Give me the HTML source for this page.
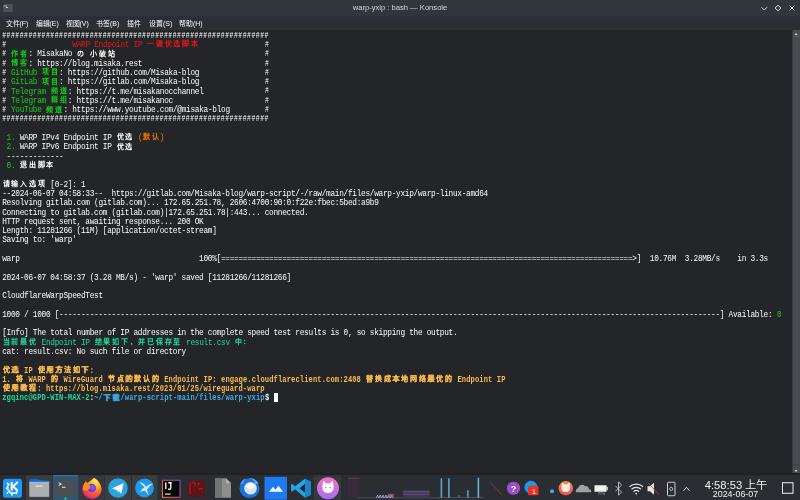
<!DOCTYPE html>
<html lang="zh-CN"><head><meta charset="utf-8">
<style>
*{margin:0;padding:0;box-sizing:border-box}
html,body{width:800px;height:500px;overflow:hidden;background:#232528}
body{position:relative;font-family:"Liberation Sans",sans-serif}
.a{position:absolute}
#title{position:absolute;left:0;top:0;width:800px;height:15.5px;background:#31363b}
#menu{position:absolute;left:0;top:15.5px;width:800px;height:14px;background:linear-gradient(#2b2f37,#2a2d32 80%,#2e3134)}
#term{position:absolute;left:0;top:29.5px;width:792px;height:445px;background:#232528}
#sb{position:absolute;left:792px;top:29.5px;width:8px;height:443px;background:#474b4f;border-left:1px solid #383c40}
#task{position:absolute;left:0;top:474.5px;width:800px;height:25.5px;background:#2a2d31}
.r{position:absolute;left:0;height:9.297px;font-family:"Liberation Mono",monospace;font-size:7.8px;line-height:9.297px;white-space:pre}
.r i{position:absolute;top:1.5px;font-style:normal;letter-spacing:-0.303px;transform:scale(1,1.15);transform-origin:0 6.73px}
.r b.c{position:absolute;top:0.8px;font-weight:bold;width:8.756px;text-align:center;font-size:7.0px}
.bd i{font-weight:bold;font-size:7.1px;letter-spacing:0.117px;transform:scale(1,1.26)}
.bd b.c{font-weight:bold;text-shadow:0.4px 0 0 currentColor}
.r i.h{font-size:6.4px;letter-spacing:0.537px;transform:scale(1,1.3);transform-origin:0 4.2px;top:0.3px}
.cur{position:absolute;width:4.6px;height:8.5px;background:#fcfcfc}
.menu span{position:absolute;top:19.6px;font-size:6.9px;line-height:8px;color:#fcfcfc;white-space:nowrap}
</style></head><body>
<div id="title">
  <div class="a" style="left:3px;top:4px;width:10px;height:8px;background:#4d5155;border-radius:1px"></div>
  <div class="a" style="left:4px;top:4.8px;width:2.5px;height:2.5px;background:#8a8d90;border-radius:1px"></div><div class="a" style="left:6px;top:7px;width:2px;height:0.9px;background:#c8cacc"></div>
  <div class="a" style="will-change:transform;left:0;top:3px;width:800px;text-align:center;font-size:7.6px;line-height:10px;color:#d5d7d9">warp-yxip : bash — Konsole</div>
  <svg class="a" style="left:755px;top:0" width="45" height="16" viewBox="0 0 45 16">
    <path d="M6.5 7.2 L9.3 10 L12.1 7.2" fill="none" stroke="#d8dadc" stroke-width="1"/>
    <path d="M23 5.3 L26 8 L23 10.8 L20 8 Z" fill="none" stroke="#d8dadc" stroke-width="1" stroke-linejoin="round"/>
    <path d="M34.5 5.5 L39.5 10.5 M39.5 5.5 L34.5 10.5" fill="none" stroke="#d8dadc" stroke-width="1"/>
  </svg>
</div>
<div id="menu" class="menu">
</div>
<div class="menu" style="position:absolute;left:0;top:0;width:800px;height:30px;will-change:transform">
  <span style="left:5.5px">文件(F)</span>
  <span style="left:35.5px">编辑(E)</span>
  <span style="left:65.5px">视图(V)</span>
  <span style="left:96px">书签(B)</span>
  <span style="left:127px">插件</span>
  <span style="left:149px">设置(S)</span>
  <span style="left:179px">帮助(H)</span>
</div>
<div id="term"></div>
<div id="sb">
  <div class="a" style="left:0;top:6.3px;width:7px;height:0.8px;background:#565a5e"></div>
  <div class="a" style="left:0;top:434.5px;width:7px;height:0.8px;background:#3e4246"></div>
  <svg class="a" style="left:-1px;top:0" width="8" height="8"><path d="M2.5 5 L4 3 L5.5 5 Z" fill="#e0e0e0"/></svg>
  <svg class="a" style="left:-1px;top:437.5px" width="8" height="8"><path d="M2.5 3 L4 5 L5.5 3 Z" fill="#e0e0e0"/></svg>
</div>
<div id="txt" style="position:absolute;left:0;top:0;width:800px;height:500px;will-change:transform"><div class="r" style="top:30.40px"><i class="h" style="left:2.20px;color:#fcfcfc">#############################################################</i></div>
<div class="r" style="top:39.70px"><i class="h" style="left:2.20px;color:#fcfcfc">#</i><i style="left:72.25px;color:#ed1515">WARP Endpoint IP </i><b class="c" style="left:146.27px;color:#ed1515">一</b><b class="c" style="left:155.03px;color:#ed1515">键</b><b class="c" style="left:163.79px;color:#ed1515">优</b><b class="c" style="left:172.54px;color:#ed1515">选</b><b class="c" style="left:181.30px;color:#ed1515">脚</b><b class="c" style="left:190.05px;color:#ed1515">本</b><i class="h" style="left:264.88px;color:#fcfcfc">#</i></div>
<div class="r" style="top:48.99px"><i class="h" style="left:2.20px;color:#fcfcfc">#</i><b class="c" style="left:10.56px;color:#11d116">作</b><b class="c" style="left:19.31px;color:#11d116">者</b><i style="left:28.47px;color:#fcfcfc">: MisakaNo </i><b class="c" style="left:76.23px;color:#fcfcfc">の</b><b class="c" style="left:89.36px;color:#fcfcfc">小</b><b class="c" style="left:98.12px;color:#fcfcfc">破</b><b class="c" style="left:106.87px;color:#fcfcfc">站</b><i class="h" style="left:264.88px;color:#fcfcfc">#</i></div>
<div class="r" style="top:58.29px"><i class="h" style="left:2.20px;color:#fcfcfc">#</i><b class="c" style="left:10.56px;color:#11d116">博</b><b class="c" style="left:19.31px;color:#11d116">客</b><i style="left:28.47px;color:#fcfcfc">: https://blog.misaka.rest                            </i><i class="h" style="left:264.88px;color:#fcfcfc">#</i></div>
<div class="r" style="top:67.59px"><i class="h" style="left:2.20px;color:#fcfcfc">#</i><i style="left:10.96px;color:#11d116">GitHub </i><b class="c" style="left:41.20px;color:#11d116">项</b><b class="c" style="left:49.96px;color:#11d116">目</b><i style="left:59.11px;color:#fcfcfc">: https://github.com/Misaka-blog               </i><i class="h" style="left:264.88px;color:#fcfcfc">#</i></div>
<div class="r" style="top:76.88px"><i class="h" style="left:2.20px;color:#fcfcfc">#</i><i style="left:10.96px;color:#11d116">GitLab </i><b class="c" style="left:41.20px;color:#11d116">项</b><b class="c" style="left:49.96px;color:#11d116">目</b><i style="left:59.11px;color:#fcfcfc">: https://gitlab.com/Misaka-blog               </i><i class="h" style="left:264.88px;color:#fcfcfc">#</i></div>
<div class="r" style="top:86.18px"><i class="h" style="left:2.20px;color:#fcfcfc">#</i><i style="left:10.96px;color:#11d116">Telegram </i><b class="c" style="left:49.96px;color:#11d116">频</b><b class="c" style="left:58.71px;color:#11d116">道</b><i style="left:67.87px;color:#fcfcfc">: https://t.me/misakanocchannel              </i><i class="h" style="left:264.88px;color:#fcfcfc">#</i></div>
<div class="r" style="top:95.48px"><i class="h" style="left:2.20px;color:#fcfcfc">#</i><i style="left:10.96px;color:#11d116">Telegram </i><b class="c" style="left:49.96px;color:#11d116">群</b><b class="c" style="left:58.71px;color:#11d116">组</b><i style="left:67.87px;color:#fcfcfc">: https://t.me/misakanoc                     </i><i class="h" style="left:264.88px;color:#fcfcfc">#</i></div>
<div class="r" style="top:104.78px"><i class="h" style="left:2.20px;color:#fcfcfc">#</i><i style="left:10.96px;color:#11d116">YouTube </i><b class="c" style="left:45.58px;color:#11d116">频</b><b class="c" style="left:54.34px;color:#11d116">道</b><i style="left:63.49px;color:#fcfcfc">: https://www.youtube.com/@misaka-blog        </i><i class="h" style="left:264.88px;color:#fcfcfc">#</i></div>
<div class="r" style="top:114.07px"><i class="h" style="left:2.20px;color:#fcfcfc">#############################################################</i></div>
<div class="r" style="top:132.67px"><i style="left:6.58px;color:#11d116">1.</i><i style="left:15.33px;color:#fcfcfc"> WARP IPv4 Endpoint IP </i><b class="c" style="left:115.63px;color:#fcfcfc">优</b><b class="c" style="left:124.38px;color:#fcfcfc">选</b><i style="left:137.92px;color:#f67400">(</i><b class="c" style="left:141.90px;color:#f67400">默</b><b class="c" style="left:150.65px;color:#f67400">认</b><i style="left:159.81px;color:#f67400">)</i></div>
<div class="r" style="top:141.96px"><i style="left:6.58px;color:#11d116">2.</i><i style="left:15.33px;color:#fcfcfc"> WARP IPv6 Endpoint IP </i><b class="c" style="left:115.63px;color:#fcfcfc">优</b><b class="c" style="left:124.38px;color:#fcfcfc">选</b></div>
<div class="r" style="top:151.26px"><i style="left:2.20px;color:#fcfcfc"> -------------</i></div>
<div class="r" style="top:160.56px"><i style="left:6.58px;color:#11d116">0.</i><b class="c" style="left:19.31px;color:#fcfcfc">退</b><b class="c" style="left:28.07px;color:#fcfcfc">出</b><b class="c" style="left:36.82px;color:#fcfcfc">脚</b><b class="c" style="left:45.58px;color:#fcfcfc">本</b></div>
<div class="r" style="top:179.15px"><b class="c" style="left:1.80px;color:#fcfcfc">请</b><b class="c" style="left:10.56px;color:#fcfcfc">输</b><b class="c" style="left:19.31px;color:#fcfcfc">入</b><b class="c" style="left:28.07px;color:#fcfcfc">选</b><b class="c" style="left:36.82px;color:#fcfcfc">项</b><i style="left:45.98px;color:#fcfcfc"> [0-2]: 1</i></div>
<div class="r" style="top:188.45px"><i style="left:2.20px;color:#fcfcfc">--2024-06-07 04:58:33--  https://gitlab.com/Misaka-blog/warp-script/-/raw/main/files/warp-yxip/warp-linux-amd64</i></div>
<div class="r" style="top:197.75px"><i style="left:2.20px;color:#fcfcfc">Resolving gitlab.com (gitlab.com)... 172.65.251.78, 2606:4700:90:0:f22e:fbec:5bed:a9b9</i></div>
<div class="r" style="top:207.04px"><i style="left:2.20px;color:#fcfcfc">Connecting to gitlab.com (gitlab.com)|172.65.251.78|:443... connected.</i></div>
<div class="r" style="top:216.34px"><i style="left:2.20px;color:#fcfcfc">HTTP request sent, awaiting response... 200 OK</i></div>
<div class="r" style="top:225.64px"><i style="left:2.20px;color:#fcfcfc">Length: 11281266 (11M) [application/octet-stream]</i></div>
<div class="r" style="top:234.93px"><i style="left:2.20px;color:#fcfcfc">Saving to: &#x27;warp&#x27;</i></div>
<div class="r" style="top:253.53px"><i style="left:2.20px;color:#fcfcfc">warp                                         100%[==============================================================================================&gt;]  10.76M  3.28MB/s    in 3.3s</i></div>
<div class="r" style="top:272.12px"><i style="left:2.20px;color:#fcfcfc">2024-06-07 04:58:37 (3.28 MB/s) - &#x27;warp&#x27; saved [11281266/11281266]</i></div>
<div class="r" style="top:290.72px"><i style="left:2.20px;color:#fcfcfc">CloudflareWarpSpeedTest</i></div>
<div class="r" style="top:309.31px"><i style="left:2.20px;color:#fcfcfc">1000 / 1000 [-------------------------------------------------------------------------------------------------------------------------------------------------------] Available: </i><i style="left:777.11px;color:#11d116">0</i></div>
<div class="r" style="top:327.90px"><i style="left:2.20px;color:#fcfcfc">[Info] The total number of IP addresses in the complete speed test results is 0, so skipping the output.</i></div>
<div class="r" style="top:337.20px"><b class="c" style="left:1.80px;color:#1cdc9a">当</b><b class="c" style="left:10.56px;color:#1cdc9a">前</b><b class="c" style="left:19.31px;color:#1cdc9a">最</b><b class="c" style="left:28.07px;color:#1cdc9a">优</b><i style="left:37.22px;color:#1cdc9a"> Endpoint IP </i><b class="c" style="left:93.74px;color:#1cdc9a">结</b><b class="c" style="left:102.49px;color:#1cdc9a">果</b><b class="c" style="left:111.25px;color:#1cdc9a">如</b><b class="c" style="left:120.01px;color:#1cdc9a">下</b><b class="c" style="left:128.76px;color:#1cdc9a">，</b><b class="c" style="left:137.52px;color:#1cdc9a">并</b><b class="c" style="left:146.27px;color:#1cdc9a">已</b><b class="c" style="left:155.03px;color:#1cdc9a">保</b><b class="c" style="left:163.79px;color:#1cdc9a">存</b><b class="c" style="left:172.54px;color:#1cdc9a">至</b><i style="left:181.70px;color:#1cdc9a"> result.csv </i><b class="c" style="left:233.83px;color:#1cdc9a">中</b><b class="c" style="left:242.59px;color:#1cdc9a">：</b></div>
<div class="r" style="top:346.50px"><i style="left:2.20px;color:#fcfcfc">cat: result.csv: No such file or directory</i></div>
<div class="r bd" style="top:365.09px"><b class="c" style="left:1.80px;color:#fdbc4b">优</b><b class="c" style="left:10.56px;color:#fdbc4b">选</b><i style="left:19.71px;color:#fdbc4b"> IP </i><b class="c" style="left:36.82px;color:#fdbc4b">使</b><b class="c" style="left:45.58px;color:#fdbc4b">用</b><b class="c" style="left:54.34px;color:#fdbc4b">方</b><b class="c" style="left:63.09px;color:#fdbc4b">法</b><b class="c" style="left:71.85px;color:#fdbc4b">如</b><b class="c" style="left:80.60px;color:#fdbc4b">下</b><i style="left:89.76px;color:#fdbc4b">:</i></div>
<div class="r bd" style="top:374.39px"><i style="left:2.20px;color:#fdbc4b">1. </i><b class="c" style="left:14.93px;color:#fdbc4b">将</b><i style="left:24.09px;color:#fdbc4b"> WARP </i><b class="c" style="left:49.96px;color:#fdbc4b">的</b><i style="left:59.11px;color:#fdbc4b"> WireGuard </i><b class="c" style="left:106.87px;color:#fdbc4b">节</b><b class="c" style="left:115.63px;color:#fdbc4b">点</b><b class="c" style="left:124.38px;color:#fdbc4b">的</b><b class="c" style="left:133.14px;color:#fdbc4b">默</b><b class="c" style="left:141.90px;color:#fdbc4b">认</b><b class="c" style="left:150.65px;color:#fdbc4b">的</b><i style="left:159.81px;color:#fdbc4b"> Endpoint IP: engage.cloudflareclient.com:2408 </i><b class="c" style="left:365.17px;color:#fdbc4b">替</b><b class="c" style="left:373.93px;color:#fdbc4b">换</b><b class="c" style="left:382.69px;color:#fdbc4b">成</b><b class="c" style="left:391.44px;color:#fdbc4b">本</b><b class="c" style="left:400.20px;color:#fdbc4b">地</b><b class="c" style="left:408.95px;color:#fdbc4b">网</b><b class="c" style="left:417.71px;color:#fdbc4b">络</b><b class="c" style="left:426.47px;color:#fdbc4b">最</b><b class="c" style="left:435.22px;color:#fdbc4b">优</b><b class="c" style="left:443.98px;color:#fdbc4b">的</b><i style="left:453.13px;color:#fdbc4b"> Endpoint IP</i></div>
<div class="r bd" style="top:383.69px"><b class="c" style="left:1.80px;color:#fdbc4b">使</b><b class="c" style="left:10.56px;color:#fdbc4b">用</b><b class="c" style="left:19.31px;color:#fdbc4b">教</b><b class="c" style="left:28.07px;color:#fdbc4b">程</b><i style="left:37.22px;color:#fdbc4b">: https://blog.misaka.rest/2023/01/25/wireguard-warp</i></div>
<div class="r bd" style="top:392.98px"><i style="left:2.20px;color:#1cdc9a">zgqinc@GPD-WIN-MAX-2</i><i style="left:89.76px;color:#fcfcfc">:</i><i style="left:94.14px;color:#3daee9">~/</i><b class="c" style="left:102.49px;color:#3daee9">下</b><b class="c" style="left:111.25px;color:#3daee9">载</b><i style="left:120.41px;color:#3daee9">/warp-script-main/files/warp-yxip</i><i style="left:264.88px;color:#fcfcfc">$ </i></div>
<div class="cur" style="left:273.64px;top:393.38px"></div></div>
<div class="a" style="left:0;top:472.5px;width:800px;height:2px;background:#1f2123"></div>
<div id="task">
<svg class="a" style="left:0;top:0;will-change:transform" width="800" height="26" viewBox="0 474.5 800 25.5" font-family="Liberation Sans, sans-serif">
  <!-- task buttons -->
  <rect x="26" y="474.5" width="26.5" height="25.5" fill="#3a3d42"/>
  <rect x="53" y="474.5" width="25.5" height="25.5" fill="#33566f"/>
  <rect x="53" y="474.5" width="25.5" height="1" fill="#3d7aa6"/>
  <rect x="79" y="474.5" width="25.5" height="25.5" fill="#37393e"/>
  <rect x="105" y="474.5" width="26" height="25.5" fill="#3a3d42"/>
  <rect x="132" y="474.5" width="25.5" height="25.5" fill="#3a3d42"/>
  <rect x="314" y="474.5" width="27" height="25.5" fill="#35383d"/>
  <!-- KDE launcher -->
  <rect x="3" y="478" width="19" height="19" rx="2.5" fill="#1d99f3"/>
  <path d="M9.2 483 A5.6 5.6 0 1 0 17.5 490.5" fill="none" stroke="#fff" stroke-width="1.5"/>
  <path d="M6 487.5 h2 M12 493 v1.8 M8 491.6 l-1.2 1.2 M16 492 l1 1 M8.3 483.3 l-1.2 -1.2" stroke="#fff" stroke-width="1.7"/>
  <path d="M11.7 481.3 V489.8" stroke="#fff" stroke-width="2.1"/>
  <path d="M12.6 486.3 L17.7 481.3 M12.8 485.6 L17.8 490" stroke="#fff" stroke-width="2"/>
  <!-- dolphin folder -->
  <path d="M29.3 482 V478.6 Q34 477.6 37 478.2 Q41 479.6 49.2 480 V482 Z" fill="#1b62c6"/>
  <rect x="29.3" y="480.3" width="19.9" height="1.6" fill="#2a7ae0"/>
  <rect x="29.3" y="481.7" width="19.9" height="14.4" fill="#adaeaf"/>
  <rect x="29.3" y="481.7" width="19.9" height="0.8" fill="#c8c9ca"/>
  <rect x="35.5" y="484.9" width="7" height="1" fill="#f4f4f4"/>
  <!-- konsole -->
  <rect x="56" y="480" width="19.5" height="15.5" fill="#4b4e52"/>
  <path d="M58.6 482 l2.8 1.4 l-2.8 1.4" stroke="#f0f0f0" stroke-width="1" fill="none"/>
  <rect x="62" y="486" width="3.6" height="1" fill="#f0f0f0"/>
  <circle cx="65.5" cy="497.9" r="1.1" fill="#1cdc9a"/>
  <!-- firefox -->
  <defs><radialGradient id="ffg" cx="0.72" cy="0.12" r="0.95"><stop offset="0" stop-color="#fff44f"/><stop offset="0.3" stop-color="#ffbd2b"/><stop offset="0.6" stop-color="#ff6a2a"/><stop offset="0.85" stop-color="#f23a5a"/><stop offset="1" stop-color="#e01f70"/></radialGradient></defs>
  <path d="M94.2 477 Q100.5 481 101.5 487.5 A9.6 9.6 0 1 1 84 483 L86 480.5 L87.5 482.5 L89.2 481 Q91.5 479 94.2 477 Z" fill="url(#ffg)"/>
  <circle cx="91.8" cy="487.3" r="4.3" fill="#6e3ad8"/>
  <circle cx="92.6" cy="486.5" r="2.6" fill="#8c52f2"/>
  <path d="M83 487.5 Q83.2 483 85.8 480.8 L86.8 482.8 L88.6 481.6 L89.4 484 Q90.8 485.5 89.6 487.8 Q87 490.2 83.8 489.8 Z" fill="#ff8c1a"/>
  <!-- telegram -->
  <circle cx="118" cy="487.3" r="9.8" fill="#2ca3dc"/>
  <path d="M112 487.5 L123.5 482.5 L121.5 493 L118 490 Z" fill="#fff"/>
  <path d="M116.5 489 L118.5 492.5 L118 490 Z" fill="#d0e8f5"/>
  <!-- bird app -->
  <circle cx="144.5" cy="487.2" r="9.4" fill="#1c9cf0"/>
  <path d="M139.5 481.5 Q144 482 146 486 Q149 483 153 482.5 Q149 486 147 489 L148.5 494.5 L145 490 Q142 489.5 139.5 492 Q141 488 144.5 486.5 Q142 484 139.5 481.5 Z" fill="#dfe6ee"/>
  <!-- IJ -->
  <defs><linearGradient id="ijg" x1="0" y1="1" x2="1" y2="0"><stop offset="0" stop-color="#ff8a2a"/><stop offset="0.5" stop-color="#f0407a"/><stop offset="1" stop-color="#5a6cf0"/></linearGradient></defs>
  <rect x="162" y="479" width="18.5" height="18" fill="url(#ijg)"/>
  <rect x="163" y="480" width="16.5" height="16" fill="#070707"/>
  <path d="M165.8 481.8 v6.5 M168.3 482 h3.4 M170.8 482 v5.3 q0 1.2 -1.2 1.2 h-1.4" stroke="#fff" stroke-width="1.3" fill="none"/>
  <rect x="165" y="492.8" width="5.5" height="1.1" fill="#fff"/>
  <!-- dark red app -->
  <rect x="188" y="480" width="17" height="16" fill="#5e1316"/>
  <path d="M190 482 v12 M192 482 h3 v3 M197 484 l3 -2 M199 488 h4" stroke="#a01820" stroke-width="1.6" fill="none"/>
  <!-- gray doc -->
  <path d="M215 477.5 h11 l5 5 v14.5 h-16 z" fill="#8b8d8e"/>
  <path d="M215 477.5 h7 v19.5 h-7 z" fill="#707274"/>
  <path d="M226 477.5 v5 h5 z" fill="#b0b2b3"/>
  <!-- thunderbird -->
  <circle cx="249.5" cy="487.5" r="10" fill="#1f6fdc"/>
  <path d="M240 484 a10 10 0 0 1 6 -6.5 a7 7 0 0 0 -2 5 z" fill="#3aa0f8"/>
  <path d="M248 477.6 a10 10 0 0 1 10.5 5 l-3 1 a7 7 0 0 0 -7.5 -6 z" fill="#54b2ff"/>
  <circle cx="250.5" cy="487.5" r="6.3" fill="#d7e3f0"/>
  <path d="M245.5 485.5 l5 -3.5 l5 3.5 l-5 3.5 z" fill="#ffffff"/>
  <!-- blue square app -->
  <rect x="264.5" y="476" width="22.5" height="23" fill="#1f7af0"/>
  <path d="M269 491 l4 -5 l2.5 3 l3 -4 l4.5 6 z" fill="#f2f6fb"/>
  <!-- vscode -->
  <path d="M305 478 l6 3 v13 l-6 3 l-10 -8.5 l-3 2.5 l-1 -1 v-6 l1 -1 l3 2.5 z" fill="#23a5ee"/>
  <path d="M305 483 v9 l-5.5 -4.5 z" fill="#232627"/>
  <path d="M305 478 l6 3 v13 l-6 3 z" fill="#1a86d0"/>
  <!-- cat circle -->
  <defs><linearGradient id="cg" x1="0" y1="0" x2="0" y2="1"><stop offset="0" stop-color="#f277c6"/><stop offset="1" stop-color="#a56ff0"/></linearGradient>
  <linearGradient id="og" x1="0" y1="0" x2="0" y2="1"><stop offset="0" stop-color="#f58a3a"/><stop offset="1" stop-color="#ea4f5c"/></linearGradient></defs>
  <circle cx="328" cy="487.5" r="11" fill="url(#cg)"/>
  <path d="M322.5 484.5 l0.8 -4.5 l3 2.8 h3.4 l3 -2.8 l0.8 4.5 v3 a5.5 4.8 0 0 1 -11 0 z" fill="#fff"/>
  <circle cx="325.8" cy="487" r="0.8" fill="#b070d0"/><circle cx="330.2" cy="487" r="0.8" fill="#b070d0"/>
  <!-- purple dim widget -->
  <rect x="348" y="477" width="11.5" height="20" fill="#382b3a"/><rect x="348" y="477" width="11.5" height="1" fill="#5a4050"/>
  <rect x="357" y="496.5" width="83" height="1" fill="#4a4d52"/>
  <text x="376" y="497" font-size="5.5" font-weight="bold" fill="#a8b8f0" letter-spacing="-0.3">ʌʌʌʌʌʌ</text><rect x="388" y="493" width="6" height="3.5" fill="#d06080" opacity="0.6"/>
  <rect x="403" y="489.5" width="26.5" height="7.5" fill="#3b3850"/>
  <rect x="403" y="490.5" width="26.5" height="1" fill="#5a5e70"/>
  <rect x="403" y="493" width="26.5" height="1" fill="#6a4a9a"/>
  <!-- cpu bars -->
  <rect x="438" y="496.3" width="45" height="1" fill="#4a5660"/>
  <rect x="440.6" y="477.5" width="1.6" height="19.5" fill="#5aa5d8"/>
  <rect x="448.1" y="477.5" width="1.6" height="19.5" fill="#5aa5d8"/>
  <rect x="467.1" y="489.5" width="1.6" height="7.5" fill="#5a9ac8"/>
  <rect x="477.6" y="477" width="1.6" height="20" fill="#6ab0dc"/>
  <rect x="458" y="494.5" width="2" height="2" fill="#4a6a80"/>
  <!-- tray -->
  <path d="M490.5 482 L502 494" stroke="#8a3c3c" stroke-width="1"/>
  <circle cx="513.5" cy="487.5" r="6.6" fill="#9d4ccb"/>
  <text x="513.5" y="491" font-size="9" font-weight="bold" fill="#fff" text-anchor="middle">?</text>
  <circle cx="531" cy="486.5" r="6.5" fill="#1d99f3"/>
  <rect x="528" y="485" width="10.5" height="9.5" rx="1.5" fill="#e8322a"/>
  <text x="534" y="492.8" font-size="7" fill="#fff" text-anchor="middle">1</text>
  <circle cx="552" cy="490.5" r="2" fill="#3daee9"/>
  <circle cx="565.8" cy="487.5" r="7.2" fill="url(#og)"/>
  <path d="M561.5 485 l0.7 -3.5 l2.3 2 h2.6 l2.3 -2 l0.7 3.5 v2.5 a4.3 3.8 0 0 1 -8.6 0 z" fill="#fbe9e6"/>
  <path d="M576 491.5 a3 3 0 0 1 2 -4 a4 4 0 0 1 7 -2 a3 3 0 0 1 4 3 a2 2 0 0 1 2 3 z" fill="#9ea0a2"/>
  <rect x="594.5" y="484.5" width="12" height="6.5" fill="#f0f0f0"/>
  <rect x="606.5" y="486" width="1.2" height="3.5" fill="#f0f0f0"/>
  <text x="601.5" y="494.5" font-size="3.5" fill="#c0c0c0" text-anchor="middle">77%</text>
  <path d="M615.5 485.2 L621.5 491.3 L618.5 494.5 V481 L621.5 484.3 L615.5 490.5" stroke="#d8d8d8" stroke-width="0.8" fill="none"/>
  <path d="M629.5 486 a10 10 0 0 1 13.5 0 M631.5 488.5 a7 7 0 0 1 9.5 0 M633.5 491 a4 4 0 0 1 5.5 0" stroke="#e6e6e6" stroke-width="1.1" fill="none"/>
  <circle cx="636.2" cy="492.8" r="0.9" fill="#e6e6e6"/>
  <path d="M647.5 485.5 h2.5 l4 -3.5 v12 l-4 -3.5 h-2.5 z" fill="#e6e6e6"/>
  <path d="M648 482 L659 494" stroke="#c04848" stroke-width="0.8"/>
  <rect x="667.5" y="481.5" width="7.5" height="13.5" rx="1" fill="none" stroke="#e6e6e6" stroke-width="0.9"/>
  <circle cx="671.2" cy="488.2" r="1.6" fill="none" stroke="#e6e6e6" stroke-width="0.7"/>
  <path d="M683.5 490 l3 -3.5 l3 3.5" stroke="#e6e6e6" stroke-width="0.9" fill="none"/>
  <text x="736" y="488.6" font-size="11.2" fill="#f0f0f0" text-anchor="middle">4:58:53 上午</text>
  <text x="735.5" y="496.2" font-size="8.9" fill="#f0f0f0" text-anchor="middle">2024-06-07</text>
  <rect x="782.5" y="482" width="10.5" height="10.5" fill="none" stroke="#eeeeee" stroke-width="1"/>
</svg>
</div>
</body></html>
